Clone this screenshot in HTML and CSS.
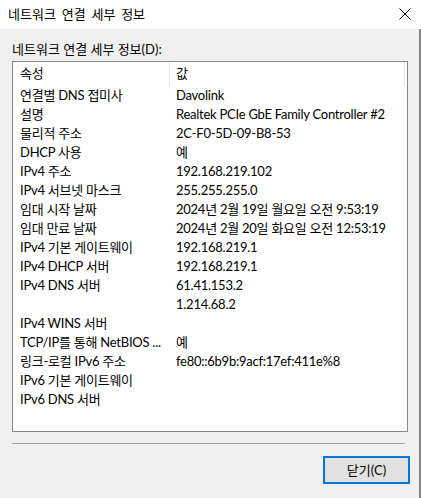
FILE: index.html
```html
<!DOCTYPE html>
<html lang="ko">
<head>
<meta charset="utf-8">
<title>네트워크 연결 세부 정보</title>
<link rel="stylesheet" href="styles.css">
</head>
<body>
<div class="window">
  <div class="titlebar">
    <span class="title">네트워크 연결 세부 정보</span>
    <svg class="close" width="12" height="12" viewBox="0 0 12 12" aria-hidden="true">
      <path d="M0.5 0.5 L11.5 11.5 M11.5 0.5 L0.5 11.5" stroke="#000" stroke-width="1" fill="none"/>
    </svg>
  </div>
  <div class="body">
    <div class="label">네트워크 연결 세부 정보(D):</div>
    <div class="listbox">
      <div class="row head"><div class="c1">속성</div><div class="c2">값</div></div>
      <div class="row"><div class="c1">연결별 DNS 접미사</div><div class="c2">Davolink</div></div>
      <div class="row"><div class="c1">설명</div><div class="c2">Realtek PCIe GbE Family Controller #2</div></div>
      <div class="row"><div class="c1">물리적 주소</div><div class="c2">2C-F0-5D-09-B8-53</div></div>
      <div class="row"><div class="c1">DHCP 사용</div><div class="c2">예</div></div>
      <div class="row"><div class="c1">IPv4 주소</div><div class="c2">192.168.219.102</div></div>
      <div class="row"><div class="c1">IPv4 서브넷 마스크</div><div class="c2">255.255.255.0</div></div>
      <div class="row"><div class="c1">임대 시작 날짜</div><div class="c2">2024년 2월 19일 월요일 오전 9:53:19</div></div>
      <div class="row"><div class="c1">임대 만료 날짜</div><div class="c2">2024년 2월 20일 화요일 오전 12:53:19</div></div>
      <div class="row"><div class="c1">IPv4 기본 게이트웨이</div><div class="c2">192.168.219.1</div></div>
      <div class="row"><div class="c1">IPv4 DHCP 서버</div><div class="c2">192.168.219.1</div></div>
      <div class="row"><div class="c1">IPv4 DNS 서버</div><div class="c2">61.41.153.2</div></div>
      <div class="row"><div class="c1"></div><div class="c2">1.214.68.2</div></div>
      <div class="row"><div class="c1">IPv4 WINS 서버</div><div class="c2"></div></div>
      <div class="row"><div class="c1">TCP/IP를 통해 NetBIOS ...</div><div class="c2">예</div></div>
      <div class="row"><div class="c1">링크-로컬 IPv6 주소</div><div class="c2">fe80::6b9b:9acf:17ef:411e%8</div></div>
      <div class="row"><div class="c1">IPv6 기본 게이트웨이</div><div class="c2"></div></div>
      <div class="row"><div class="c1">IPv6 DNS 서버</div><div class="c2"></div></div>
    </div>
    <div class="sep"></div>
    <div class="actions">
      <button class="btn" type="button">닫기(C)</button>
    </div>
  </div>
</div>
</body>
</html>
```
FILE: styles.css
```css
* { box-sizing: border-box; }

html, body {
  margin: 0;
  padding: 0;
  background: #f0f0f0;
}

body {
  font-family: "Lato", "Noto Sans CJK KR", sans-serif;
  font-size: 13px;
  color: #000;
}

.window {
  width: 421px;
  height: 498px;
  display: flex;
  flex-direction: column;
  overflow: hidden;
}

.titlebar {
  height: 29px;
  flex: none;
  background: #fff;
  display: flex;
  align-items: center;
  justify-content: space-between;
  padding: 0 10px 2px 8px;
}

.title {
  line-height: 16px;
  word-spacing: 2.5px;
}

.close {
  display: block;
  margin-top: 1px;
}

.body {
  flex: 1;
  background: #f0f0f0;
  border-right: 2px solid #858585;
  padding: 12px 0 0 12px;
  display: flex;
  flex-direction: column;
}

.label {
  line-height: 16px;
  height: 16px;
  margin-bottom: 4px;
}

.listbox {
  width: 396px;
  height: 371px;
  background: #fff;
  border: 1px solid #828790;
  flex: none;
  letter-spacing: -0.25px;
}

.row {
  display: flex;
  height: 19px;
  line-height: 19px;
  white-space: nowrap;
}

.row.head {
  height: 24px;
  line-height: 22px;
  padding-right: 2px;
}

.c1 {
  width: 157px;
  flex: none;
  padding-left: 7px;
  overflow: hidden;
}

.c2 {
  flex: 1;
  padding-left: 6px;
  padding-right: 1px;
  overflow: hidden;
}

.head .c1 {
  border-right: 1px solid #e5e5e5;
}

.head .c2 {
  border-right: 1px solid #e5e5e5;
}

.sep {
  width: 393px;
  height: 1px;
  background: #a0a0a0;
  margin-top: 11px;
  flex: none;
}

.actions {
  display: flex;
  justify-content: flex-end;
  padding-right: 9px;
  margin-top: 12px;
}

.btn {
  width: 87px;
  height: 28px;
  border: 2px solid #0078d7;
  background: #e1e1e1;
  font-family: "Lato", "Noto Sans CJK KR", sans-serif;
  font-size: 13px;
  color: #000;
  padding: 0 0 1px 0;
  margin: 0;
  line-height: 16px;
}
```
